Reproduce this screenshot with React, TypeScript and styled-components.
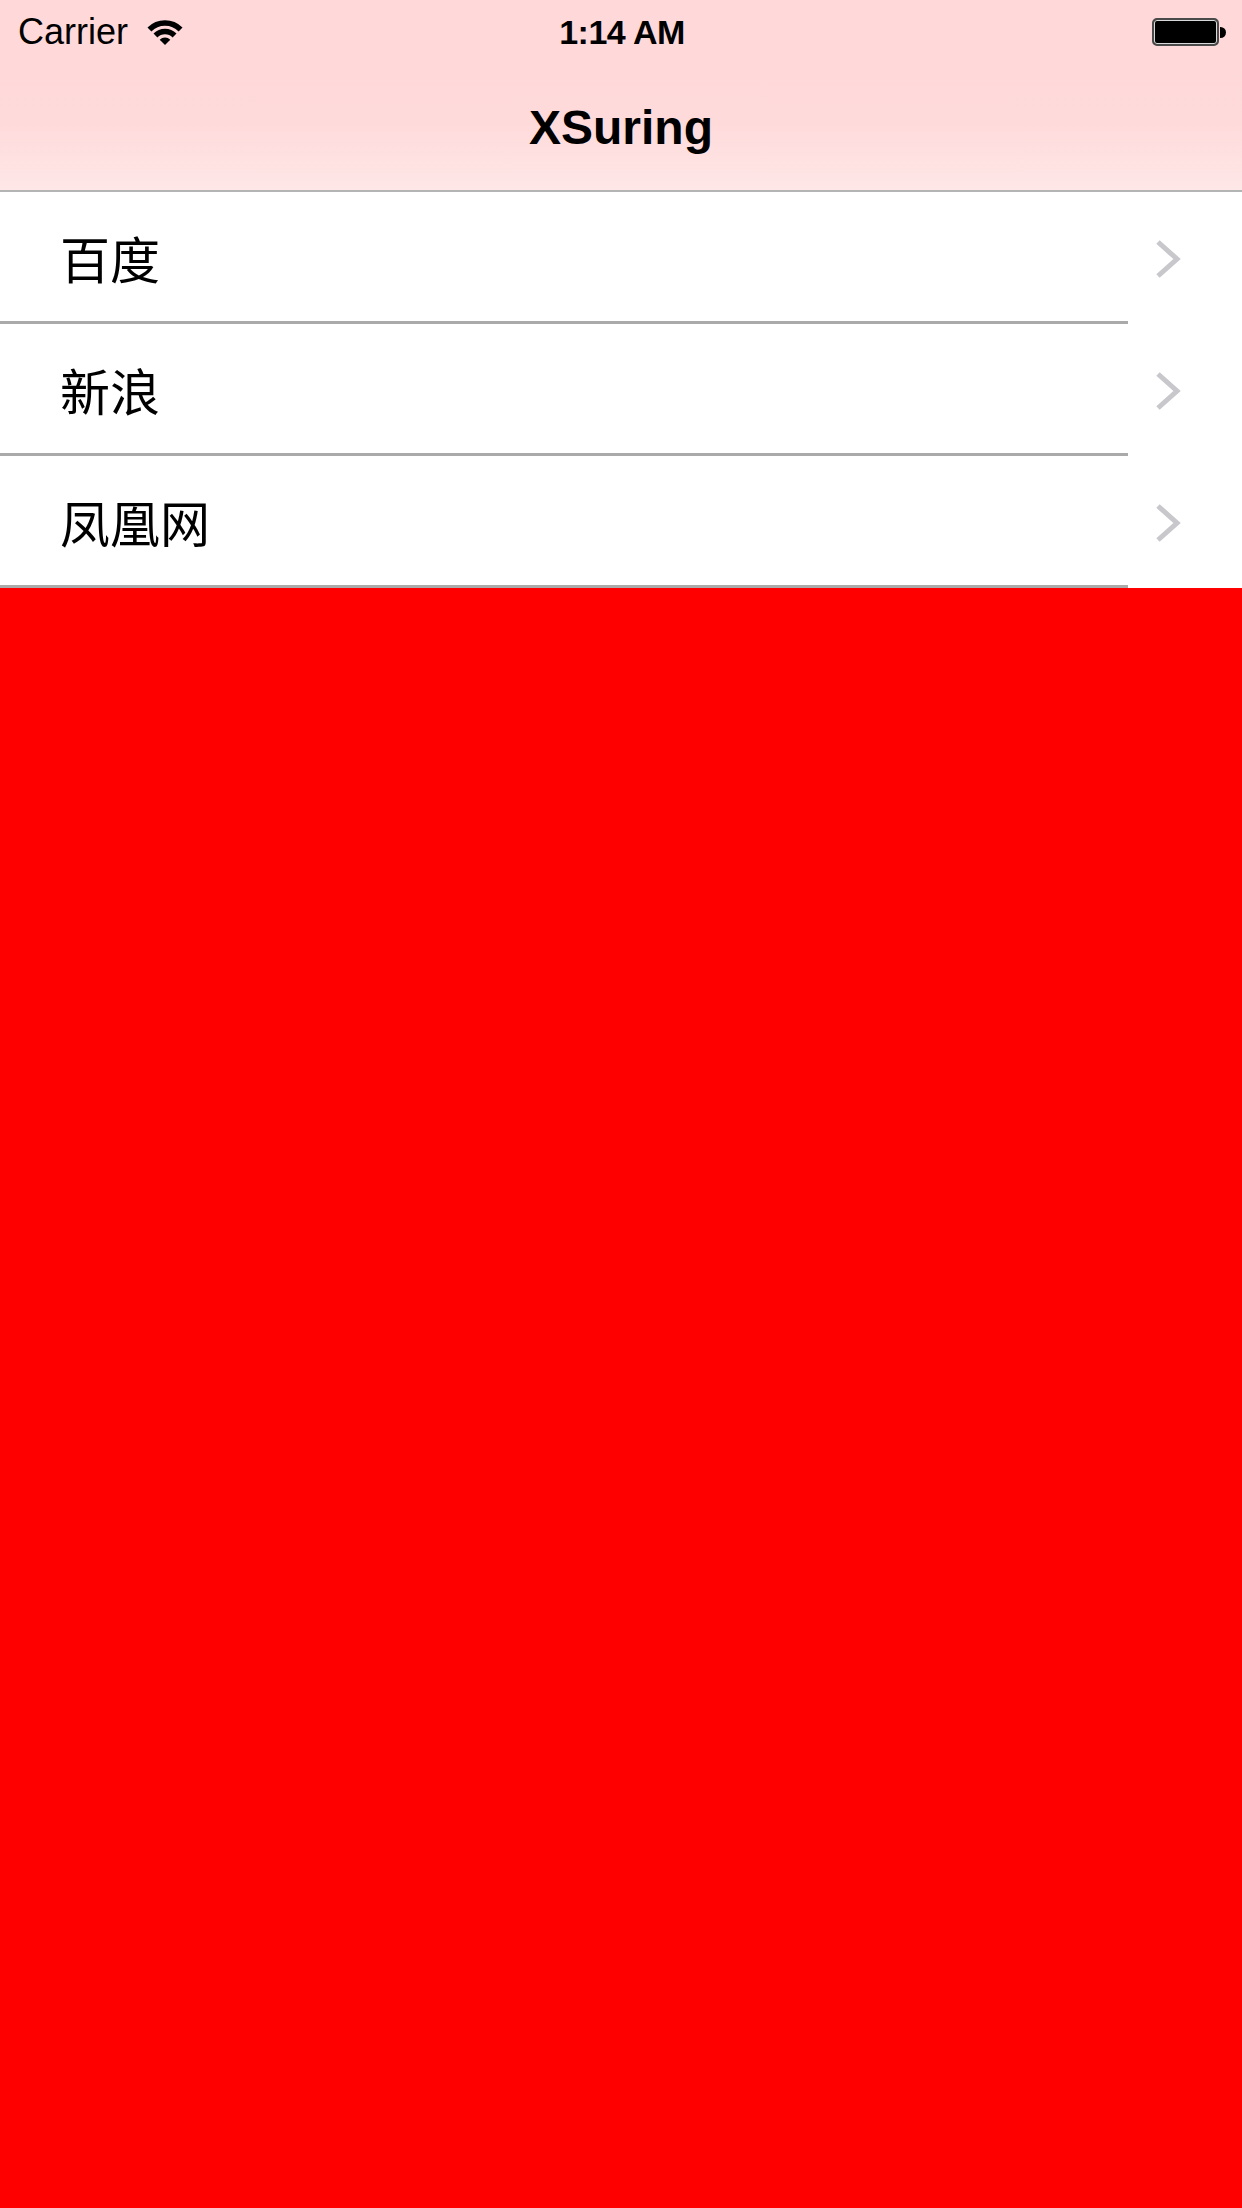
import React from 'react';
import styled, { createGlobalStyle } from 'styled-components';

const GlobalStyle = createGlobalStyle`
    html, body {
        margin: 0;
        padding: 0;
        background: #ff0000;
    }
    * {
        box-sizing: border-box;
    }
`;

const Screen = styled.div`
    display: flex;
    flex-direction: column;
    min-height: 100vh;
    background: #ff0000;
    font-family: "Liberation Sans", Arial, sans-serif;
    color: #000;
`;

const Header = styled.header`
    display: flex;
    flex-direction: column;
    height: 192px;
    background: linear-gradient(#ffd8d9 0%, #ffdadb 65%, #fee7e7 100%);
    border-bottom: 2px solid #b4b4b4;
`;

const StatusBar = styled.div`
    display: grid;
    grid-template-columns: 1fr auto 1fr;
    align-items: center;
    height: 60px;
    padding: 4px 16px 0 18px;
`;

const Carrier = styled.div`
    display: flex;
    align-items: center;
    gap: 18px;
    font-size: 36px;
    line-height: 1;
`;

const Clock = styled.div`
    font-size: 34px;
    font-weight: bold;
    line-height: 1;
    letter-spacing: -0.5px;
`;

const BatterySlot = styled.div`
    display: flex;
    justify-content: flex-end;
    align-items: center;
`;

const Battery = styled.div`
    width: 67px;
    height: 28px;
    border-radius: 5px;
    background: #000;
    border: 2px solid #4a4a4a;
    box-shadow: inset 0 0 0 1px #d9d9d9;
`;

const BatteryNub = styled.div`
    width: 6px;
    height: 11px;
    border-radius: 0 6px 6px 0;
    background: #000;
    margin-left: 1px;
`;

const TitleBar = styled.div`
    flex: 1;
    display: flex;
    align-items: center;
    justify-content: center;
    padding-top: 6px;
`;

const Title = styled.h1`
    margin: 0;
    font-size: 48px;
    font-weight: bold;
    line-height: 1;
`;

const List = styled.ul`
    list-style: none;
    margin: 0;
    padding: 0;
    background: #fff;
`;

const Row = styled.li`
    display: flex;
    flex-direction: column;
    height: 132px;
    background: #fff;
`;

const RowBody = styled.div`
    flex: 1;
    display: flex;
    align-items: center;
    justify-content: space-between;
    padding: 0 60px;
`;

const RowLabel = styled.span`
    font-family: "Noto Sans CJK SC", "Liberation Sans", sans-serif;
    font-size: 50px;
    line-height: 1;
    color: #000;
`;

const ChevronBox = styled.span`
    display: flex;
    margin-top: 5px;
`;

const Separator = styled.div`
    height: 3px;
    width: 1128px;
    background: #aaaaaa;
`;

const Wifi = () => (
    <svg width="38" height="28" viewBox="0 0 38 28">
        <path d="M3.44 11.44 A22 22 0 0 1 34.56 11.44" fill="none" stroke="#000" strokeWidth="5.5" />
        <path d="M9.45 17.45 A13.5 13.5 0 0 1 28.55 17.45" fill="none" stroke="#000" strokeWidth="5.5" />
        <path d="M19 27 L13.7 21.7 A7.5 7.5 0 0 1 24.3 21.7 Z" fill="#000" />
    </svg>
);

const Chevron = () => (
    <ChevronBox>
        <svg width="28" height="42" viewBox="0 0 28 42">
            <polyline points="4,4 23,21 4,38" fill="none" stroke="#c7c7cc" strokeWidth="5" />
        </svg>
    </ChevronBox>
);

const sites = ['百度', '新浪', '凤凰网'];

export default function App() {
    return (
        <Screen>
            <GlobalStyle />
            <Header>
                <StatusBar>
                    <Carrier>
                        Carrier
                        <Wifi />
                    </Carrier>
                    <Clock>1:14 AM</Clock>
                    <BatterySlot>
                        <Battery />
                        <BatteryNub />
                    </BatterySlot>
                </StatusBar>
                <TitleBar>
                    <Title>XSuring</Title>
                </TitleBar>
            </Header>
            <List>
                {sites.map((name) => (
                    <Row key={name}>
                        <RowBody>
                            <RowLabel>{name}</RowLabel>
                            <Chevron />
                        </RowBody>
                        <Separator />
                    </Row>
                ))}
            </List>
        </Screen>
    );
}
